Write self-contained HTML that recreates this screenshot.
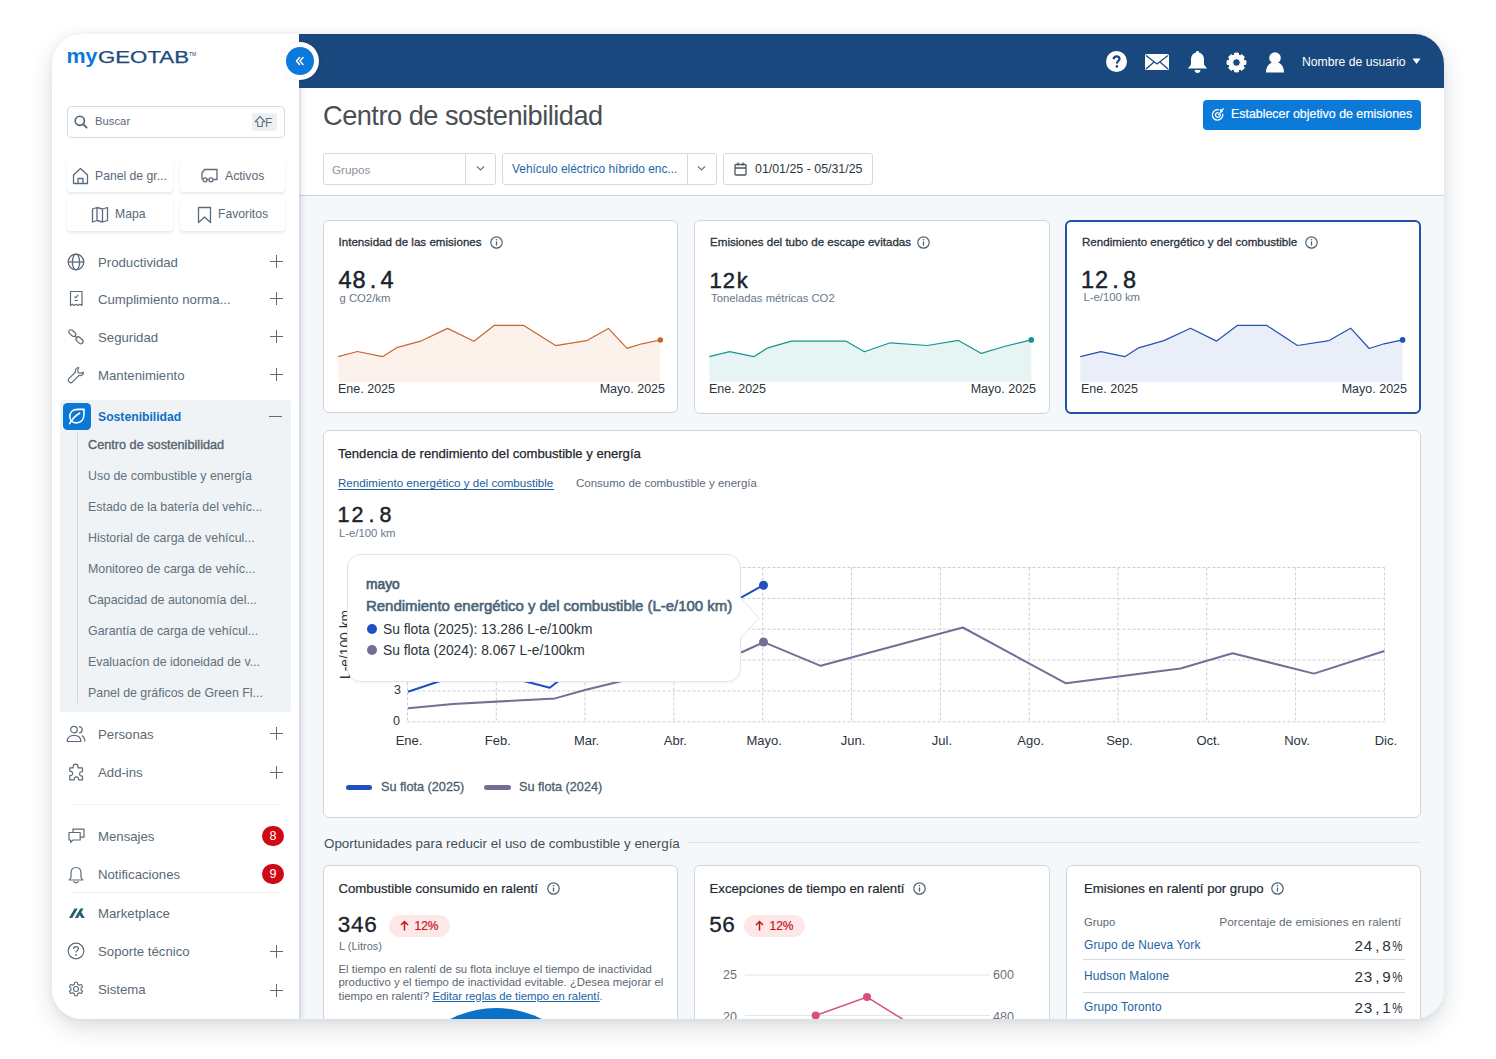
<!DOCTYPE html>
<html><head><meta charset="utf-8">
<style>
*{box-sizing:border-box;margin:0;padding:0}
html,body{width:1496px;height:1059px;overflow:hidden;background:#fff;font-family:"Liberation Sans",sans-serif}
.t{position:absolute;line-height:1;white-space:nowrap}
.m{font-family:"Liberation Mono",monospace}
.ab{position:absolute}
#shadow{position:absolute;left:52px;top:34px;width:1392px;height:985px;border-radius:30px;background:#f5f8fb;box-shadow:0 9px 22px rgba(40,60,85,.17),0 0 10px rgba(40,60,85,.06)}
#app{position:absolute;left:0;top:0;width:1496px;height:1059px;clip-path:inset(34px 52px 40px 52px round 30px)}
#main{position:absolute;left:299px;top:34px;width:1145px;height:986px;background:#f5f8fb}
#side{position:absolute;left:52px;top:34px;width:247px;height:986px;background:#fff;z-index:3;box-shadow:2px 0 0 rgba(70,90,110,.07),3px 0 6px rgba(60,80,100,.14)}
#hdr{position:absolute;left:299px;top:34px;width:1145px;height:54px;background:#19487e}
#top{position:absolute;left:299px;top:88px;width:1145px;height:108px;background:#fff;border-bottom:1px solid #cdd4db}
.card{position:absolute;background:#fff;border:1px solid #cfd4d9;border-radius:6px}
.s{font-size:13.2px;color:#5a6a76}
.s2{font-size:12.2px;color:#5a6a76}
.sub{font-size:12.4px;color:#61707b}
.qb{background:#fff;border-radius:4px;box-shadow:0 2px 3px rgba(40,50,60,.10),0 0 1px rgba(40,50,60,.05)}
.plus{position:absolute;left:270px;width:13px;height:13px;margin-top:-7.5px}
.plus:before{content:"";position:absolute;left:0;top:6px;width:13px;height:1.2px;background:#5a6b7b}
.plus:after{content:"";position:absolute;left:6px;top:0;width:1.2px;height:13px;background:#5a6b7b}
.kt{font-size:11.6px;color:#2a323b;-webkit-text-stroke:.3px #2a323b}
.kv{font-size:23.5px;color:#1a222b;-webkit-text-stroke:.45px #1a222b}
.kv span,.bv span{display:inline-block;text-align:center}
.kv2{font-size:23px;color:#1d2630;-webkit-text-stroke:.2px #1d2630}
.ku{font-size:11.3px;color:#66788a}
.kl{font-size:12.5px;color:#2c343c}
.ml{font-size:13px;color:#2c343c}
.bt{font-size:13.2px;color:#222a32;-webkit-text-stroke:.2px #222a32}
.bv{font-size:22.5px;color:#1a222b;-webkit-text-stroke:.3px #1a222b}
.badge2{height:22px;border-radius:11px;background:#fde7e7;color:#c4161c;font-size:12px;line-height:22px;text-align:center;-webkit-text-stroke:.2px #c4161c}
.para{font-size:11.35px;color:#5b6873}
.lk{font-size:11.9px;color:#1a62a2;letter-spacing:.15px}
.pv{font-size:15.2px;color:#2b333b}
.pv span{display:inline-block;text-align:center}
.badge{width:22px;height:20px;border-radius:10px;background:#cf0a14;color:#fff;font-size:12.5px;line-height:20px;text-align:center;font-weight:400}
</style></head><body>
<div id="shadow"></div>
<div id="app">
  <div id="main"></div>
  <div id="hdr"></div>
  <div id="top"></div>
  <div id="side"></div>

  <!-- SIDEBAR CONTENT -->
  <div class="ab" style="left:0;top:0;z-index:4">
  <!-- logo -->
  <svg class="ab" style="left:64px;top:46px" width="136" height="26" viewBox="0 0 136 26">
    <text x="2.5" y="17" font-family="Liberation Sans" font-weight="700" font-size="20" fill="#0a7ad6" textLength="31" lengthAdjust="spacingAndGlyphs">my</text>
    <text x="34" y="17" font-family="Liberation Sans" font-weight="400" font-size="16.3" fill="#1b4a80" textLength="91" lengthAdjust="spacingAndGlyphs" stroke="#1b4a80" stroke-width=".25">GEOTAB</text>
    <text x="125" y="9.5" font-family="Liberation Sans" font-size="5" fill="#1b4a80">TM</text>
  </svg>
  <!-- search -->
  <div class="ab" style="left:67px;top:106px;width:218px;height:32px;border:1px solid #d5dbe0;border-radius:4px;background:#fff"></div>
  <svg class="ab" style="left:73px;top:114px" width="16" height="16" viewBox="0 0 16 16"><circle cx="6.8" cy="6.8" r="4.6" fill="none" stroke="#4f6272" stroke-width="1.6"/><path d="M10.2 10.2 L13.6 13.6" stroke="#4f6272" stroke-width="1.8" stroke-linecap="round"/></svg>
  <div class="t" style="left:95px;top:calc(126px - .85em);font-size:11.3px;color:#5a6a78">Buscar</div>
  <div class="ab" style="left:252px;top:113px;width:25px;height:18px;background:#eef1f3;border-radius:3px"></div>
  <svg class="ab" style="left:254px;top:115px" width="12" height="14" viewBox="0 0 12 14"><path d="M6 1.5 L11 6.8 H8.3 V11.5 H3.7 V6.8 H1 Z" fill="none" stroke="#627080" stroke-width="1.1" stroke-linejoin="round"/></svg>
  <div class="t" style="left:265px;top:calc(127px - .85em);font-size:12px;color:#627080">F</div>

  <!-- quick buttons -->
  <div class="ab qb" style="left:67px;top:160px;width:106px;height:32px"></div>
  <div class="ab qb" style="left:180px;top:160px;width:105px;height:32px"></div>
  <div class="ab qb" style="left:67px;top:199px;width:106px;height:32px"></div>
  <div class="ab qb" style="left:180px;top:199px;width:105px;height:32px"></div>
  <svg class="ab" style="left:72px;top:167px" width="17" height="18" viewBox="0 0 17 18"><path d="M1.5 8 L8.5 1.5 L15.5 8 V16.5 H1.5 Z M6 16.5 V11.5 H11 V16.5" fill="none" stroke="#5a6b7b" stroke-width="1.3" stroke-linejoin="round"/></svg>
  <div class="t s2" style="left:95px;top:calc(180px - .85em)">Panel de gr...</div>
  <svg class="ab" style="left:201px;top:168px" width="18" height="15" viewBox="0 0 18 15"><path d="M1 11.5 V5 L3.5 1.5 H16 V11.5 H12.5 M7.5 11.5 H5.8" fill="none" stroke="#5a6b7b" stroke-width="1.3" stroke-linejoin="round"/><circle cx="4" cy="11.8" r="2" fill="none" stroke="#5a6b7b" stroke-width="1.3"/><circle cx="10" cy="11.8" r="2" fill="none" stroke="#5a6b7b" stroke-width="1.3"/></svg>
  <div class="t s2" style="left:225px;top:calc(180px - .85em)">Activos</div>
  <svg class="ab" style="left:91px;top:206px" width="18" height="17" viewBox="0 0 18 17"><path d="M1.5 3 L6 1.5 L11.5 3 L16.5 1.5 V14.5 L11.5 16 L6 14.5 L1.5 16 Z M6 1.5 V14.5 M11.5 3 V16" fill="none" stroke="#5a6b7b" stroke-width="1.3" stroke-linejoin="round"/></svg>
  <div class="t s2" style="left:115px;top:calc(218px - .85em)">Mapa</div>
  <svg class="ab" style="left:197px;top:206px" width="15" height="18" viewBox="0 0 15 18"><path d="M1.5 1.5 H13.5 V16.5 L7.5 11 L1.5 16.5 Z" fill="none" stroke="#5a6b7b" stroke-width="1.3" stroke-linejoin="round"/></svg>
  <div class="t s2" style="left:218px;top:calc(218px - .85em)">Favoritos</div>

  <!-- nav items -->
  <svg class="ab" style="left:67px;top:253px" width="18" height="18" viewBox="0 0 18 18"><circle cx="9" cy="9" r="7.8" fill="none" stroke="#5a6b7b" stroke-width="1.3"/><ellipse cx="9" cy="9" rx="3.6" ry="7.8" fill="none" stroke="#5a6b7b" stroke-width="1.3"/><path d="M1.2 9 H16.8" stroke="#5a6b7b" stroke-width="1.3"/></svg>
  <div class="t s" style="left:98px;top:calc(267px - .85em)">Productividad</div>
  <svg class="ab" style="left:69px;top:290px" width="15" height="17" viewBox="0 0 15 17"><path d="M1.5 1.5 H13 V15.5 L11 14.3 L9.2 15.5 L7.3 14.3 L5.4 15.5 L3.5 14.3 L1.5 15.5 Z" fill="none" stroke="#5a6b7b" stroke-width="1.2" stroke-linejoin="round"/><path d="M5.5 6.5 L6.8 7.8 L9.2 4.8 M5.5 10.5 H9" fill="none" stroke="#5a6b7b" stroke-width="1.1"/></svg>
  <div class="t s" style="left:98px;top:calc(304.5px - .85em)">Cumplimiento norma...</div>
  <svg class="ab" style="left:67px;top:328px" width="18" height="18" viewBox="0 0 18 18"><g fill="none" stroke="#5a6b7b" stroke-width="1.2"><rect x="1.3" y="3" width="8" height="4.2" rx="2.1" transform="rotate(42 5.3 5.1)"/><rect x="8.5" y="10" width="8" height="4.6" rx="2.3" transform="rotate(42 12.5 12.3)"/><path d="M7.6 7.6 L10.6 10.4"/></g></svg>
  <div class="t s" style="left:98px;top:calc(342px - .85em)">Seguridad</div>
  <svg class="ab" style="left:67px;top:366px" width="18" height="18" viewBox="0 0 18 18"><path d="M11.6 1.5 C9.2 1.6 7.8 3.8 8.6 6 L1.8 12.6 C1 13.4 1 14.7 1.8 15.5 L2.5 16.2 C3.3 17 4.5 17 5.3 16.2 L12 9.4 C14.2 10.2 16.4 8.8 16.5 6.4 L13.8 7.2 L11.2 6.8 L10.8 4.2 Z" fill="none" stroke="#5a6b7b" stroke-width="1.2" stroke-linejoin="round"/></svg>
  <div class="t s" style="left:98px;top:calc(380px - .85em)">Mantenimiento</div>

  <!-- plus signs -->
  <div class="plus" style="top:262px"></div>
  <div class="plus" style="top:299.5px"></div>
  <div class="plus" style="top:337px"></div>
  <div class="plus" style="top:375px"></div>

  <!-- active group -->
  <div class="ab" style="left:60px;top:400px;width:231px;height:312px;background:#eff3f6;border-radius:3px"></div>
  <div class="ab" style="left:63px;top:403px;width:28px;height:27px;background:#0b78d6;border-radius:4.5px"></div>
  <svg class="ab" style="left:60px;top:400px" width="35" height="33" viewBox="0 0 35 33"><path d="M24 9.4 H17.5 C12.6 9.4 9.8 12.5 9.8 16.5 C9.8 20.3 12.6 22.9 16.3 22.9 C21 22.9 24 19.5 24 14 Z" fill="none" stroke="#fff" stroke-width="1.6" stroke-linejoin="round"/><path d="M9.6 23.6 C12 19.5 15 15.5 19.6 13.2" fill="none" stroke="#fff" stroke-width="1.6" stroke-linecap="round"/></svg>
  <div class="t" style="left:98px;top:calc(421.5px - .85em);font-size:12.2px;font-weight:700;color:#0d6fc5">Sostenibilidad</div>
  <div class="ab" style="left:269px;top:415.5px;width:13px;height:1.3px;background:#5a6b7b"></div>
  <div class="ab" style="left:77px;top:433px;width:1px;height:270px;background:#cfd6dc"></div>
  <div class="t sub" style="left:88px;top:calc(450px - .85em);font-size:12.7px;color:#55626d;-webkit-text-stroke:.35px #55626d">Centro de sostenibilidad</div>
  <div class="t sub" style="left:88px;top:calc(480.5px - .85em)">Uso de combustible y energía</div>
  <div class="t sub" style="left:88px;top:calc(511.5px - .85em)">Estado de la batería del vehíc...</div>
  <div class="t sub" style="left:88px;top:calc(542.5px - .85em)">Historial de carga de vehícul...</div>
  <div class="t sub" style="left:88px;top:calc(573.5px - .85em)">Monitoreo de carga de vehíc...</div>
  <div class="t sub" style="left:88px;top:calc(604.5px - .85em)">Capacidad de autonomía del...</div>
  <div class="t sub" style="left:88px;top:calc(635.5px - .85em)">Garantía de carga de vehícul...</div>
  <div class="t sub" style="left:88px;top:calc(666.5px - .85em)">Evaluacíon de idoneidad de v...</div>
  <div class="t sub" style="left:88px;top:calc(697.5px - .85em)">Panel de gráficos de Green Fl...</div>

  <!-- lower nav -->
  <svg class="ab" style="left:66px;top:725px" width="20" height="18" viewBox="0 0 20 18"><g fill="none" stroke="#5a6b7b" stroke-width="1.2"><circle cx="8" cy="4.6" r="3.3"/><path d="M1.2 16.5 C1.2 12.5 4 10.3 8 10.3 C12 10.3 14.8 12.5 14.8 16.5 Z"/><path d="M12.8 1.6 C15 1.8 16.2 3.2 16.2 4.8 C16.2 6.4 15 7.8 13 8 M15.8 10.6 C17.8 11.6 18.8 13.6 18.8 16.5"/></g></svg>
  <div class="t s" style="left:98px;top:calc(739px - .85em)">Personas</div>
  <svg class="ab" style="left:67px;top:763px" width="18" height="18" viewBox="0 0 18 18"><path d="M6.2 3.8 C6.2 2.2 7.3 1.2 8.6 1.2 C9.9 1.2 11 2.2 11 3.8 L11 4.8 H15.5 V8.6 C13.6 8.4 12.6 9.5 12.6 10.9 C12.6 12.3 13.6 13.4 15.5 13.2 V16.8 H11.6 C11.8 14.8 10.8 13.8 9.4 13.8 C8 13.8 7 14.8 7.2 16.8 H2.8 V12.6 C4.6 12.8 5.6 11.8 5.6 10.4 C5.6 9 4.6 8 2.8 8.2 V4.8 H6.2 Z" fill="none" stroke="#5a6b7b" stroke-width="1.2" stroke-linejoin="round"/></svg>
  <div class="t s" style="left:98px;top:calc(777.5px - .85em)">Add-ins</div>
  <div class="plus" style="top:734.5px"></div>
  <div class="plus" style="top:773.5px"></div>
  <div class="ab" style="left:72px;top:803.5px;width:208px;height:1px;background:#f1f3f5"></div>

  <svg class="ab" style="left:68px;top:828px" width="17" height="16" viewBox="0 0 17 16"><g fill="none" stroke="#5a6b7b" stroke-width="1.2" stroke-linejoin="round"><path d="M5 4.5 V1.2 H16 V9.2 H12.2"/><path d="M1 4.5 H12.2 V12 H5 L2.6 14.4 V12 H1 Z"/></g></svg>
  <div class="t s" style="left:98px;top:calc(841px - .85em)">Mensajes</div>
  <div class="ab badge" style="left:262px;top:826px">8</div>
  <svg class="ab" style="left:68px;top:866px" width="16" height="18" viewBox="0 0 16 18"><path d="M8 1.5 C4.8 1.5 3 3.8 3 7 V11.5 L1.2 14 H14.8 L13 11.5 V7 C13 3.8 11.2 1.5 8 1.5 Z M5.8 15 C6 16.2 6.9 16.8 8 16.8 C9.1 16.8 10 16.2 10.2 15" fill="none" stroke="#5a6b7b" stroke-width="1.2" stroke-linejoin="round"/></svg>
  <div class="t s" style="left:98px;top:calc(879px - .85em)">Notificaciones</div>
  <div class="ab badge" style="left:262px;top:864px">9</div>
  <div class="ab" style="left:72px;top:892px;width:208px;height:1px;background:#edf0f2"></div>

  <svg class="ab" style="left:68px;top:907px" width="18" height="12" viewBox="0 0 18 12"><path d="M1 11 L6.5 1.5 H9.8 L4.3 11 Z M6.8 11 L12.3 1.5 H15.6 L13.4 5.3 L16.8 11 H13.5 L11.7 8 L10.1 11 Z" fill="#2a6275"/></svg>
  <div class="t s" style="left:98px;top:calc(918.5px - .85em)">Marketplace</div>
  <svg class="ab" style="left:67px;top:942px" width="18" height="18" viewBox="0 0 18 18"><circle cx="9" cy="9" r="7.8" fill="none" stroke="#5a6b7b" stroke-width="1.2"/><path d="M6.6 7 C6.6 5.5 7.6 4.7 9 4.7 C10.4 4.7 11.4 5.5 11.4 6.8 C11.4 8.4 9 8.6 9 10.4" fill="none" stroke="#5a6b7b" stroke-width="1.3"/><circle cx="9" cy="12.9" r=".9" fill="#5a6b7b"/></svg>
  <div class="t s" style="left:98px;top:calc(956px - .85em)">Soporte técnico</div>
  <svg class="ab" style="left:67px;top:980px" width="18" height="18" viewBox="0 0 24 24"><path d="M10.3 2 H13.7 L14.3 4.8 C15.1 5.1 15.8 5.5 16.4 6 L19.1 5.1 L20.8 8 L18.7 9.9 C18.8 10.6 18.8 11.4 18.7 12.1 L20.8 14 L19.1 16.9 L16.4 16 C15.8 16.5 15.1 16.9 14.3 17.2 L13.7 20 H10.3 L9.7 17.2 C8.9 16.9 8.2 16.5 7.6 16 L4.9 16.9 L3.2 14 L5.3 12.1 C5.2 11.4 5.2 10.6 5.3 9.9 L3.2 8 L4.9 5.1 L7.6 6 C8.2 5.5 8.9 5.1 9.7 4.8 Z" transform="translate(0 1)" fill="none" stroke="#5a6b7b" stroke-width="1.5" stroke-linejoin="round"/><circle cx="12" cy="12" r="3.3" fill="none" stroke="#5a6b7b" stroke-width="1.5"/></svg>
  <div class="t s" style="left:98px;top:calc(994px - .85em)">Sistema</div>
  <div class="plus" style="top:952.5px"></div>
  <div class="plus" style="top:991px"></div>
  </div>


  <!-- HEADER CONTENT -->
  <div class="ab" style="left:0;top:0;z-index:5">
  <div class="ab" style="left:281px;top:42px;width:38px;height:38px;border-radius:50%;background:#fff;box-shadow:1px 0 2px rgba(10,30,60,.25)"></div>
  <div class="ab" style="left:286px;top:47px;width:28px;height:28px;border-radius:50%;background:#0b78dc"></div>
  <svg class="ab" style="left:293px;top:54px" width="14" height="14" viewBox="0 0 14 14"><path d="M6.5 3.5 L3.5 7 L6.5 10.5 M10 3.5 L7 7 L10 10.5" fill="none" stroke="#fff" stroke-width="1.5" stroke-linecap="round" stroke-linejoin="round"/></svg>

  <svg class="ab" style="left:1106px;top:51px" width="21" height="21" viewBox="0 0 21 21"><circle cx="10.5" cy="10.5" r="10.5" fill="#fff"/><path d="M7.6 8.2 C7.6 6.3 8.9 5.3 10.6 5.3 C12.3 5.3 13.5 6.3 13.5 7.9 C13.5 10 10.9 10.1 10.9 12.4" fill="none" stroke="#19487e" stroke-width="2.2"/><circle cx="10.9" cy="15.4" r="1.3" fill="#19487e"/></svg>
  <svg class="ab" style="left:1145px;top:54px" width="24" height="16" viewBox="0 0 24 16"><rect x="0" y="0" width="24" height="16" rx="1.5" fill="#fff"/><path d="M1 1.5 L12 10 L23 1.5 M1 15 L9 8 M23 15 L15 8" fill="none" stroke="#19487e" stroke-width="1.3"/></svg>
  <svg class="ab" style="left:1187px;top:50px" width="21" height="24" viewBox="0 0 21 24"><path d="M10.5 1 C11.5 1 12 1.6 12 2.4 C15.4 3.1 17 5.8 17 9.5 V14.5 L20 18.5 H1 L4 14.5 V9.5 C4 5.8 5.6 3.1 9 2.4 C9 1.6 9.5 1 10.5 1 Z" fill="#fff"/><path d="M7.6 20 H13.4 C13.4 21.8 12.2 23 10.5 23 C8.8 23 7.6 21.8 7.6 20 Z" fill="#fff"/></svg>
  <svg class="ab" style="left:1226px;top:51.5px" width="21" height="21" viewBox="0 0 21 21"><path fill="#fff" fill-rule="evenodd" stroke="#fff" stroke-width="1" stroke-linejoin="round" d="M8.28 3.23 L8.67 1.08 L12.33 1.08 L12.72 3.23 L14.07 3.79 L15.87 2.54 L18.46 5.13 L17.21 6.93 L17.77 8.28 L19.92 8.67 L19.92 12.33 L17.77 12.72 L17.21 14.07 L18.46 15.87 L15.87 18.46 L14.07 17.21 L12.72 17.77 L12.33 19.92 L8.67 19.92 L8.28 17.77 L6.93 17.21 L5.13 18.46 L2.54 15.87 L3.79 14.07 L3.23 12.72 L1.08 12.33 L1.08 8.67 L3.23 8.28 L3.79 6.93 L2.54 5.13 L5.13 2.54 L6.93 3.79 Z M14.30 10.50 A3.8 3.8 0 1 0 6.70 10.50 A3.8 3.8 0 1 0 14.30 10.50 Z"/></svg>
  <svg class="ab" style="left:1265px;top:52px" width="20" height="21" viewBox="0 0 20 21"><circle cx="10" cy="6" r="5.8" fill="#fff"/><path d="M1 20.5 C1 14.8 4 11.2 7.5 10.6 L10 11.5 L12.5 10.6 C16 11.2 19 14.8 19 20.5 Z" fill="#fff"/></svg>
  <div class="t" style="left:1302px;top:calc(66px - .85em);font-size:12.2px;color:#fff">Nombre de usuario</div>
  <svg class="ab" style="left:1412px;top:58px" width="9" height="7" viewBox="0 0 9 7"><path d="M0.5 0.5 H8.5 L4.5 6 Z" fill="#fff"/></svg>

  <!-- title -->
  <div class="t" style="left:323px;top:calc(125.5px - .85em);font-size:27.2px;color:#4a4f55;letter-spacing:-.5px">Centro de sostenibilidad</div>
  <div class="ab" style="left:1203px;top:100px;width:218px;height:30px;background:#0b7ad8;border-radius:4px"></div>
  <svg class="ab" style="left:1211px;top:108px" width="14" height="14" viewBox="0 0 14 14"><g fill="none" stroke="#fff" stroke-width="1.3"><path d="M11.6 5.6 A5.2 5.2 0 1 1 8.2 2"/><path d="M9.2 6.2 A2.4 2.4 0 1 1 7.4 4.6"/><path d="M7 7 L11 3 M9.6 1.2 V3.2 H11.8 M10 3 L12.6 0.6"/></g></svg>
  <div class="t" style="left:1231px;top:calc(119px - .85em);font-size:12.4px;color:#fff;-webkit-text-stroke:.2px #fff">Establecer objetivo de emisiones</div>

  <!-- filters -->
  <div class="ab" style="left:323px;top:153px;width:173px;height:32px;border:1px solid #d4dae0;border-radius:3px;background:#fff"></div>
  <div class="ab" style="left:465px;top:154px;width:1px;height:30px;background:#d4dae0"></div>
  <div class="t" style="left:332px;top:calc(174px - .85em);font-size:11.7px;color:#8a949d">Grupos</div>
  <svg class="ab" style="left:476px;top:165px" width="9" height="7" viewBox="0 0 9 7"><path d="M1 1.5 L4.5 5 L8 1.5" fill="none" stroke="#6b7884" stroke-width="1.2"/></svg>
  <div class="ab" style="left:502px;top:153px;width:215px;height:32px;border:1px solid #d4dae0;border-radius:3px;background:#fff"></div>
  <div class="ab" style="left:687px;top:154px;width:1px;height:30px;background:#d4dae0"></div>
  <div class="t" style="left:512px;top:calc(174px - .85em);font-size:11.9px;color:#1a68a8">Vehículo eléctrico híbrido enc...</div>
  <svg class="ab" style="left:697px;top:165px" width="9" height="7" viewBox="0 0 9 7"><path d="M1 1.5 L4.5 5 L8 1.5" fill="none" stroke="#6b7884" stroke-width="1.2"/></svg>
  <div class="ab" style="left:723px;top:153px;width:150px;height:32px;border:1px solid #d4dae0;border-radius:3px;background:#fff"></div>
  <svg class="ab" style="left:734px;top:162px" width="13" height="14" viewBox="0 0 13 14"><g fill="none" stroke="#4a5563" stroke-width="1.3"><rect x="1" y="2.5" width="11" height="10.5" rx="1"/><path d="M1 6 H12 M4 0.5 V3.5 M9 0.5 V3.5"/></g></svg>
  <div class="t" style="left:755px;top:calc(174px - .85em);font-size:12.4px;color:#2e3740">01/01/25 - 05/31/25</div>
  </div>

  <!-- KPI cards -->
  <div class="card" style="left:323px;top:220px;width:355px;height:193px"></div>
  <div class="card" style="left:694px;top:220px;width:356px;height:194px"></div>
  <div class="card" style="left:1065px;top:220px;width:356px;height:194px;border:2px solid #2350a8"></div>

  <!-- KPI content -->
  <svg class="ab" style="left:0;top:0" width="1496" height="1059"><polygon points="338.2,356.7 357.5,351.5 382.4,356.7 396.8,347.7 420.5,341.2 447.5,328.4 474.0,341.2 494.4,325.3 523.4,325.3 555.6,345.6 586.5,340.7 608.4,328.4 627.0,348.4 641.8,343.8 660.3,340.0 660.3,382.0 338.2,382.0" fill="#fdf1eb"/><polyline points="338.2,356.7 357.5,351.5 382.4,356.7 396.8,347.7 420.5,341.2 447.5,328.4 474.0,341.2 494.4,325.3 523.4,325.3 555.6,345.6 586.5,340.7 608.4,328.4 627.0,348.4 641.8,343.8 660.3,340.0" fill="none" stroke="#c8662e" stroke-width="1.2" stroke-linejoin="round"/><circle cx="660.3" cy="340" r="2.8" fill="#c8662e"/><polygon points="709.3,356.7 729.6,351.7 753.8,356.7 767.9,347.8 791.4,341.1 845.8,341.1 864.4,351.7 890.3,342.8 927.4,345.5 958.4,340.4 981.4,353.4 1004.1,346.5 1031.3,339.9 1031.3,382.0 709.3,382.0" fill="#e6f5f4"/><polyline points="709.3,356.7 729.6,351.7 753.8,356.7 767.9,347.8 791.4,341.1 845.8,341.1 864.4,351.7 890.3,342.8 927.4,345.5 958.4,340.4 981.4,353.4 1004.1,346.5 1031.3,339.9" fill="none" stroke="#16958f" stroke-width="1.2" stroke-linejoin="round"/><circle cx="1031.3" cy="339.9" r="2.8" fill="#16958f"/><polygon points="1080.3,356.7 1100.8,351.7 1124.8,356.7 1138.7,347.8 1163.9,340.6 1190.6,328.2 1216.6,341.1 1237.6,325.3 1266.5,325.3 1297.4,345.5 1329.1,340.6 1350.6,328.2 1369.2,348.5 1384.0,343.8 1402.6,339.9 1402.6,382.0 1080.3,382.0" fill="#e9eef9"/><polyline points="1080.3,356.7 1100.8,351.7 1124.8,356.7 1138.7,347.8 1163.9,340.6 1190.6,328.2 1216.6,341.1 1237.6,325.3 1266.5,325.3 1297.4,345.5 1329.1,340.6 1350.6,328.2 1369.2,348.5 1384.0,343.8 1402.6,339.9" fill="none" stroke="#2251b4" stroke-width="1.2" stroke-linejoin="round"/><circle cx="1402.6" cy="339.9" r="2.8" fill="#2251b4"/></svg>
  <div class="t kt" style="left:338.5px;top:calc(245.8px - .85em)">Intensidad de las emisiones</div>
  <svg class="ab" style="left:490.0px;top:235.5px" width="13" height="13" viewBox="0 0 13 13"><circle cx="6.5" cy="6.5" r="5.7" fill="none" stroke="#4d6072" stroke-width="1.2"/><path d="M6.5 5.6 V9.6" stroke="#4d6072" stroke-width="1.3"/><circle cx="6.5" cy="3.7" r=".8" fill="#4d6072"/></svg>
  <div class="t kv" style="left:338px;top:calc(288.5px - .85em)"><span style="width:14px">4</span><span style="width:14px">8</span><span style="width:14px">.</span><span style="width:14px">4</span></div>
  <div class="t ku" style="left:339.5px;top:calc(303px - .85em)">g CO2/km</div>
  <div class="t kl" style="left:338px;top:calc(394px - .85em)">Ene. 2025</div>
  <div class="t kl" style="right:831px;top:calc(394px - .85em)">Mayo. 2025</div>
  <div class="t kt" style="left:710px;top:calc(245.8px - .85em)">Emisiones del tubo de escape evitadas</div>
  <svg class="ab" style="left:916.5px;top:235.5px" width="13" height="13" viewBox="0 0 13 13"><circle cx="6.5" cy="6.5" r="5.7" fill="none" stroke="#4d6072" stroke-width="1.2"/><path d="M6.5 5.6 V9.6" stroke="#4d6072" stroke-width="1.3"/><circle cx="6.5" cy="3.7" r=".8" fill="#4d6072"/></svg>
  <div class="t kv" style="left:709px;top:calc(288.6px - .85em);font-size:22px"><span style="width:13.3px">1</span><span style="width:13.3px">2</span><span style="width:13.3px">k</span></div>
  <div class="t ku" style="left:711px;top:calc(302.5px - .85em)">Toneladas métricas CO2</div>
  <div class="t kl" style="left:709px;top:calc(394px - .85em)">Ene. 2025</div>
  <div class="t kl" style="right:460px;top:calc(394px - .85em)">Mayo. 2025</div>
  <div class="t kt" style="left:1082px;top:calc(245.8px - .85em)">Rendimiento energético y del combustible</div>
  <svg class="ab" style="left:1305.0px;top:235.5px" width="13" height="13" viewBox="0 0 13 13"><circle cx="6.5" cy="6.5" r="5.7" fill="none" stroke="#4d6072" stroke-width="1.2"/><path d="M6.5 5.6 V9.6" stroke="#4d6072" stroke-width="1.3"/><circle cx="6.5" cy="3.7" r=".8" fill="#4d6072"/></svg>
  <div class="t kv" style="left:1080.6px;top:calc(288.5px - .85em)"><span style="width:14px">1</span><span style="width:14px">2</span><span style="width:14px">.</span><span style="width:14px">8</span></div>
  <div class="t ku" style="left:1083.5px;top:calc(302px - .85em)">L-e/100 km</div>
  <div class="t kl" style="left:1081px;top:calc(394px - .85em)">Ene. 2025</div>
  <div class="t kl" style="right:89px;top:calc(394px - .85em)">Mayo. 2025</div>

  <!-- trend card -->
  <div class="card" style="left:323px;top:430px;width:1098px;height:388px"></div>

  <!-- trend content -->
  <div class="t" style="left:338px;top:calc(458px - .85em);font-size:13.1px;color:#1f262d;-webkit-text-stroke:.25px #1f262d">Tendencia de rendimiento del combustible y energía</div>
  <div class="t" style="left:338px;top:calc(487px - .85em);font-size:11.6px;color:#1c5d9a">Rendimiento energético y del combustible</div>
  <div class="ab" style="left:338px;top:489px;width:216px;height:1px;background:#1c5d9a"></div>
  <div class="t" style="left:576px;top:calc(487.8px - .85em);font-size:11.5px;color:#5d6a77">Consumo de combustible y energía</div>
  <div class="t kv" style="left:336.5px;top:calc(523.2px - .85em);font-size:21.5px"><span style="width:14px">1</span><span style="width:14px">2</span><span style="width:14px">.</span><span style="width:14px">8</span></div>
  <div class="t ku" style="left:339px;top:calc(538px - .85em)">L-e/100 km</div>
  <svg class="ab" style="left:0;top:0" width="1496" height="1059"><g stroke="#c9ced6" stroke-width="1" stroke-dasharray="3,2"><path d="M407.5 567.5 H1384.5"/><path d="M407.5 598.4 H1384.5"/><path d="M407.5 629.2 H1384.5"/><path d="M407.5 660.0 H1384.5"/><path d="M407.5 690.9 H1384.5"/><path d="M407.5 721.8 H1384.5"/><path d="M407.5 567.5 V721.5"/><path d="M496.3 567.5 V721.5"/><path d="M585.1 567.5 V721.5"/><path d="M673.9 567.5 V721.5"/><path d="M762.7 567.5 V721.5"/><path d="M851.5 567.5 V721.5"/><path d="M940.4 567.5 V721.5"/><path d="M1029.2 567.5 V721.5"/><path d="M1118.0 567.5 V721.5"/><path d="M1206.8 567.5 V721.5"/><path d="M1295.6 567.5 V721.5"/><path d="M1384.4 567.5 V721.5"/></g><polyline points="408.0,708.3 453.0,704.0 555.1,698.4 585.9,689.8 622.0,681.0 680.0,664.0 742.3,652.0 763.7,642.2 820.7,665.8 962.8,627.5 1066.0,683.3 1180.5,668.5 1232.6,653.3 1314.0,673.6 1384.4,651.0" fill="none" stroke="#726f96" stroke-width="2" stroke-linejoin="round"/><polyline points="408.0,691.7 440.2,681.0 480.0,672.0 525.7,681.5 549.8,687.7 557.8,681.5 620.0,650.0 700.0,615.0 742.3,596.8 762.9,585.3" fill="none" stroke="#1f4fc0" stroke-width="2" stroke-linejoin="round"/><circle cx="763.5" cy="585.3" r="4.5" fill="#1f4fc0"/><circle cx="763.5" cy="642" r="4.5" fill="#726f96"/></svg>
  <div class="t" style="left:394px;top:calc(695px - .85em);font-size:12.5px;color:#2c343c">3</div>
  <div class="t" style="left:393px;top:calc(726px - .85em);font-size:12.5px;color:#2c343c">0</div>
  <div class="ab" style="left:338px;top:604px;width:16px;height:76px;overflow:hidden"><div class="t" style="left:0;top:75px;font-size:13.8px;color:#2c343c;transform:rotate(-90deg);transform-origin:0 0;line-height:15px">L-e/100 km</div></div>
  <div class="t ml" style="left:369.0px;width:80px;text-align:center;top:calc(745.5px - .85em)">Ene.</div><div class="t ml" style="left:457.8px;width:80px;text-align:center;top:calc(745.5px - .85em)">Feb.</div><div class="t ml" style="left:546.6px;width:80px;text-align:center;top:calc(745.5px - .85em)">Mar.</div><div class="t ml" style="left:635.4px;width:80px;text-align:center;top:calc(745.5px - .85em)">Abr.</div><div class="t ml" style="left:724.2px;width:80px;text-align:center;top:calc(745.5px - .85em)">Mayo.</div><div class="t ml" style="left:813.0px;width:80px;text-align:center;top:calc(745.5px - .85em)">Jun.</div><div class="t ml" style="left:901.9px;width:80px;text-align:center;top:calc(745.5px - .85em)">Jul.</div><div class="t ml" style="left:990.7px;width:80px;text-align:center;top:calc(745.5px - .85em)">Ago.</div><div class="t ml" style="left:1079.5px;width:80px;text-align:center;top:calc(745.5px - .85em)">Sep.</div><div class="t ml" style="left:1168.3px;width:80px;text-align:center;top:calc(745.5px - .85em)">Oct.</div><div class="t ml" style="left:1257.1px;width:80px;text-align:center;top:calc(745.5px - .85em)">Nov.</div><div class="t ml" style="left:1345.9px;width:80px;text-align:center;top:calc(745.5px - .85em)">Dic.</div>
  <!-- tooltip -->
  <div class="ab" style="left:347px;top:554px;width:394px;height:128px;background:#fff;border:1px solid #e3e6ea;border-radius:14px;box-shadow:0 1px 3px rgba(0,0,0,.05)"></div>
  <svg class="ab" style="left:739px;top:596px" width="22" height="44" viewBox="0 0 22 44"><path d="M1 1 L20 22 L1 43" fill="#fff" stroke="#e3e6ea" stroke-width="1"/><path d="M0 2 V42" stroke="#fff" stroke-width="2.5"/></svg>
  <div class="t" style="left:366px;top:calc(589.8px - .85em);font-size:13.8px;color:#4b5c6b;-webkit-text-stroke:.65px #4b5c6b">mayo</div>
  <div class="t" style="left:366px;top:calc(612px - .85em);font-size:14.95px;color:#4a6478;-webkit-text-stroke:.6px #4a6478">Rendimiento energético y del combustible (L-e/100 km)</div>
  <div class="ab" style="left:366.5px;top:623.5px;width:10px;height:10px;border-radius:50%;background:#1f4fc0"></div>
  <div class="t" style="left:383px;top:calc(634.5px - .85em);font-size:13.8px;color:#2b333b">Su flota (2025): 13.286 L-e/100km</div>
  <div class="ab" style="left:366.5px;top:644.5px;width:10px;height:10px;border-radius:50%;background:#726f96"></div>
  <div class="t" style="left:383px;top:calc(655.5px - .85em);font-size:13.8px;color:#2b333b">Su flota (2024): 8.067 L-e/100km</div>
  <!-- legend -->
  <div class="ab" style="left:345.5px;top:785px;width:26.5px;height:5px;border-radius:2.5px;background:#1f4fc0"></div>
  <div class="t" style="left:381px;top:calc(791.5px - .85em);font-size:12.7px;color:#4b5e6e;-webkit-text-stroke:.3px #4b5e6e">Su flota (2025)</div>
  <div class="ab" style="left:484px;top:785px;width:26.5px;height:5px;border-radius:2.5px;background:#726f96"></div>
  <div class="t" style="left:519px;top:calc(791.5px - .85em);font-size:12.7px;color:#4b5e6e;-webkit-text-stroke:.3px #4b5e6e">Su flota (2024)</div>

  <!-- bottom cards -->
  <div class="card" style="left:323px;top:865px;width:355px;height:200px"></div>
  <div class="card" style="left:694px;top:865px;width:356px;height:200px"></div>
  <div class="card" style="left:1066px;top:865px;width:355px;height:200px"></div>

  <div class="t" style="left:324px;top:calc(848px - .85em);font-size:13.4px;color:#474e55">Oportunidades para reducir el uso de combustible y energía</div>
  <div class="ab" style="left:688px;top:842px;width:733px;height:1px;background:#dde2e7"></div>
  <!-- card 1 -->
  <div class="t bt" style="left:338.5px;top:calc(893.5px - .85em)">Combustible consumido en ralentí</div>
  <svg class="ab" style="left:546.5px;top:882.0px" width="13" height="13" viewBox="0 0 13 13"><circle cx="6.5" cy="6.5" r="5.7" fill="none" stroke="#4d6072" stroke-width="1.2"/><path d="M6.5 5.6 V9.6" stroke="#4d6072" stroke-width="1.3"/><circle cx="6.5" cy="3.7" r=".8" fill="#4d6072"/></svg>
  <div class="t bv" style="left:337.5px;top:calc(933px - .85em)"><span style="width:13.2px">3</span><span style="width:13.2px">4</span><span style="width:13.2px">6</span></div>
  <div class="ab badge2" style="left:389px;top:915px;width:61px"><svg width="9" height="11" viewBox="0 0 9 11" style="vertical-align:-1px;margin-right:5px"><path d="M4.5 10.5 V1.8 M1 5 L4.5 1.5 L8 5" fill="none" stroke="#c4161c" stroke-width="1.5"/></svg>12%</div>
  <div class="t" style="left:339px;top:calc(950.5px - .85em);font-size:11px;color:#5f6b77">L (Litros)</div>
  <div class="t para" style="left:338.5px;top:calc(973.5px - .85em)">El tiempo en ralentí de su flota incluye el tiempo de inactividad</div>
  <div class="t para" style="left:338.5px;top:calc(987px - .85em)">productivo y el tiempo de inactividad evitable. ¿Desea mejorar el</div>
  <div class="t para" style="left:338.5px;top:calc(1000.5px - .85em)">tiempo en ralentí? <span style="color:#1b64a8;text-decoration:underline">Editar reglas de tiempo en ralentí</span>.</div>
  <div class="ab" style="left:396px;top:1008px;width:200px;height:200px;border-radius:50%;background:#0b71c6"></div>
  <!-- card 2 -->
  <div class="t bt" style="left:709.5px;top:calc(893.5px - .85em)">Excepciones de tiempo en ralentí</div>
  <svg class="ab" style="left:912.5px;top:882.0px" width="13" height="13" viewBox="0 0 13 13"><circle cx="6.5" cy="6.5" r="5.7" fill="none" stroke="#4d6072" stroke-width="1.2"/><path d="M6.5 5.6 V9.6" stroke="#4d6072" stroke-width="1.3"/><circle cx="6.5" cy="3.7" r=".8" fill="#4d6072"/></svg>
  <div class="t bv" style="left:709px;top:calc(933.5px - .85em)"><span style="width:13px">5</span><span style="width:13px">6</span></div>
  <div class="ab badge2" style="left:744px;top:915px;width:61px"><svg width="9" height="11" viewBox="0 0 9 11" style="vertical-align:-1px;margin-right:5px"><path d="M4.5 10.5 V1.8 M1 5 L4.5 1.5 L8 5" fill="none" stroke="#c4161c" stroke-width="1.5"/></svg>12%</div>
  <div class="t" style="left:723px;top:calc(979.5px - .85em);font-size:12.5px;color:#6a737c">25</div>
  <div class="t" style="left:993px;top:calc(979.5px - .85em);font-size:12.5px;color:#6a737c">600</div>
  <div class="t" style="left:723px;top:calc(1022px - .85em);font-size:12.5px;color:#6a737c">20</div>
  <div class="t" style="left:993px;top:calc(1022px - .85em);font-size:12.5px;color:#6a737c">480</div>
  <svg class="ab" style="left:0;top:0" width="1496" height="1059"><path d="M745 975 H990 M745 1015.5 H990" stroke="#e3e6ea" stroke-width="1"/><polyline points="815.7,1015.5 867,997 920,1030" fill="none" stroke="#d9507e" stroke-width="1.5"/><circle cx="815.7" cy="1015.5" r="4" fill="#d9507e"/><circle cx="867" cy="997" r="4" fill="#d9507e"/></svg>
  <!-- card 3 -->
  <div class="t bt" style="left:1084px;top:calc(893.5px - .85em)">Emisiones en ralentí por grupo</div>
  <svg class="ab" style="left:1270.5px;top:882.0px" width="13" height="13" viewBox="0 0 13 13"><circle cx="6.5" cy="6.5" r="5.7" fill="none" stroke="#4d6072" stroke-width="1.2"/><path d="M6.5 5.6 V9.6" stroke="#4d6072" stroke-width="1.3"/><circle cx="6.5" cy="3.7" r=".8" fill="#4d6072"/></svg>
  <div class="t" style="left:1084px;top:calc(927px - .85em);font-size:11.3px;color:#5f6b77">Grupo</div>
  <div class="t" style="right:95px;top:calc(927px - .85em);font-size:11.8px;color:#5f6b77">Porcentaje de emisiones en ralentí</div>
  <div class="t lk" style="left:1084px;top:calc(950.5px - .85em)">Grupo de Nueva York</div>
  <div class="t pv" style="left:1354px;top:calc(950.8px - .85em)"><span style="width:9.3px">2</span><span style="width:9.3px">4</span><span style="width:9.3px">,</span><span style="width:9.3px">8</span><span style="width:10px;transform:scaleX(.75)">%</span></div>
  <div class="ab" style="left:1083px;top:959px;width:322px;height:1px;background:#d5dadf"></div>
  <div class="t lk" style="left:1084px;top:calc(981.5px - .85em)">Hudson Malone</div>
  <div class="t pv" style="left:1354px;top:calc(981.8px - .85em)"><span style="width:9.3px">2</span><span style="width:9.3px">3</span><span style="width:9.3px">,</span><span style="width:9.3px">9</span><span style="width:10px;transform:scaleX(.75)">%</span></div>
  <div class="ab" style="left:1083px;top:992px;width:322px;height:1px;background:#d5dadf"></div>
  <div class="t lk" style="left:1084px;top:calc(1012px - .85em)">Grupo Toronto</div>
  <div class="t pv" style="left:1354px;top:calc(1013.3px - .85em)"><span style="width:9.3px">2</span><span style="width:9.3px">3</span><span style="width:9.3px">,</span><span style="width:9.3px">1</span><span style="width:10px;transform:scaleX(.75)">%</span></div>
</div>
</body></html>
